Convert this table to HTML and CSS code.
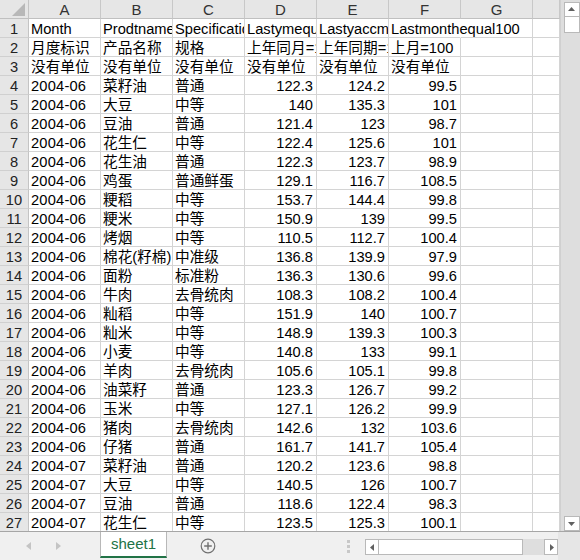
FILE: index.html
```html
<!DOCTYPE html>
<html>
<head>
<meta charset="utf-8">
<link rel="stylesheet" href="styles.css">
</head>
<body>
<div class="top">
  <div class="sheet">
    <div class="row hdr">
      <div class="corner"><svg width="28" height="18" viewBox="0 0 28 18"><polygon points="12,16 25,16 25,3" fill="#b8b8b8"/></svg></div>
      <div class="ch">A</div><div class="ch">B</div><div class="ch">C</div><div class="ch">D</div><div class="ch">E</div><div class="ch">F</div><div class="ch">G</div><div class="ch"></div>
    </div>
    <div class="row"><div class="rh">1</div><div class="c">Month</div><div class="c">Prodtname</div><div class="c">Specification</div><div class="c">Lastymequal100</div><div class="c">Lastyaccmequal100</div><div class="c over">Lastmonthequal100</div><div class="c"></div><div class="c"></div></div>
    <div class="row"><div class="rh">2</div><div class="c">月度标识</div><div class="c">产品名称</div><div class="c">规格</div><div class="c">上年同月=100</div><div class="c">上年同期=100</div><div class="c">上月=100</div><div class="c"></div><div class="c"></div></div>
    <div class="row"><div class="rh">3</div><div class="c">没有单位</div><div class="c">没有单位</div><div class="c">没有单位</div><div class="c">没有单位</div><div class="c">没有单位</div><div class="c">没有单位</div><div class="c"></div><div class="c"></div></div>
    <div class="row"><div class="rh">4</div><div class="c d">2004-06</div><div class="c">菜籽油</div><div class="c">普通</div><div class="c n">122.3</div><div class="c n">124.2</div><div class="c n">99.5</div><div class="c"></div><div class="c"></div></div>
    <div class="row"><div class="rh">5</div><div class="c d">2004-06</div><div class="c">大豆</div><div class="c">中等</div><div class="c n">140</div><div class="c n">135.3</div><div class="c n">101</div><div class="c"></div><div class="c"></div></div>
    <div class="row"><div class="rh">6</div><div class="c d">2004-06</div><div class="c">豆油</div><div class="c">普通</div><div class="c n">121.4</div><div class="c n">123</div><div class="c n">98.7</div><div class="c"></div><div class="c"></div></div>
    <div class="row"><div class="rh">7</div><div class="c d">2004-06</div><div class="c">花生仁</div><div class="c">中等</div><div class="c n">122.4</div><div class="c n">125.6</div><div class="c n">101</div><div class="c"></div><div class="c"></div></div>
    <div class="row"><div class="rh">8</div><div class="c d">2004-06</div><div class="c">花生油</div><div class="c">普通</div><div class="c n">122.3</div><div class="c n">123.7</div><div class="c n">98.9</div><div class="c"></div><div class="c"></div></div>
    <div class="row"><div class="rh">9</div><div class="c d">2004-06</div><div class="c">鸡蛋</div><div class="c">普通鲜蛋</div><div class="c n">129.1</div><div class="c n">116.7</div><div class="c n">108.5</div><div class="c"></div><div class="c"></div></div>
    <div class="row"><div class="rh">10</div><div class="c d">2004-06</div><div class="c">粳稻</div><div class="c">中等</div><div class="c n">153.7</div><div class="c n">144.4</div><div class="c n">99.8</div><div class="c"></div><div class="c"></div></div>
    <div class="row"><div class="rh">11</div><div class="c d">2004-06</div><div class="c">粳米</div><div class="c">中等</div><div class="c n">150.9</div><div class="c n">139</div><div class="c n">99.5</div><div class="c"></div><div class="c"></div></div>
    <div class="row"><div class="rh">12</div><div class="c d">2004-06</div><div class="c">烤烟</div><div class="c">中等</div><div class="c n">110.5</div><div class="c n">112.7</div><div class="c n">100.4</div><div class="c"></div><div class="c"></div></div>
    <div class="row"><div class="rh">13</div><div class="c d">2004-06</div><div class="c">棉花(籽棉)</div><div class="c">中准级</div><div class="c n">136.8</div><div class="c n">139.9</div><div class="c n">97.9</div><div class="c"></div><div class="c"></div></div>
    <div class="row"><div class="rh">14</div><div class="c d">2004-06</div><div class="c">面粉</div><div class="c">标准粉</div><div class="c n">136.3</div><div class="c n">130.6</div><div class="c n">99.6</div><div class="c"></div><div class="c"></div></div>
    <div class="row"><div class="rh">15</div><div class="c d">2004-06</div><div class="c">牛肉</div><div class="c">去骨统肉</div><div class="c n">108.3</div><div class="c n">108.2</div><div class="c n">100.4</div><div class="c"></div><div class="c"></div></div>
    <div class="row"><div class="rh">16</div><div class="c d">2004-06</div><div class="c">籼稻</div><div class="c">中等</div><div class="c n">151.9</div><div class="c n">140</div><div class="c n">100.7</div><div class="c"></div><div class="c"></div></div>
    <div class="row"><div class="rh">17</div><div class="c d">2004-06</div><div class="c">籼米</div><div class="c">中等</div><div class="c n">148.9</div><div class="c n">139.3</div><div class="c n">100.3</div><div class="c"></div><div class="c"></div></div>
    <div class="row"><div class="rh">18</div><div class="c d">2004-06</div><div class="c">小麦</div><div class="c">中等</div><div class="c n">140.8</div><div class="c n">133</div><div class="c n">99.1</div><div class="c"></div><div class="c"></div></div>
    <div class="row"><div class="rh">19</div><div class="c d">2004-06</div><div class="c">羊肉</div><div class="c">去骨统肉</div><div class="c n">105.6</div><div class="c n">105.1</div><div class="c n">99.8</div><div class="c"></div><div class="c"></div></div>
    <div class="row"><div class="rh">20</div><div class="c d">2004-06</div><div class="c">油菜籽</div><div class="c">普通</div><div class="c n">123.3</div><div class="c n">126.7</div><div class="c n">99.2</div><div class="c"></div><div class="c"></div></div>
    <div class="row"><div class="rh">21</div><div class="c d">2004-06</div><div class="c">玉米</div><div class="c">中等</div><div class="c n">127.1</div><div class="c n">126.2</div><div class="c n">99.9</div><div class="c"></div><div class="c"></div></div>
    <div class="row"><div class="rh">22</div><div class="c d">2004-06</div><div class="c">猪肉</div><div class="c">去骨统肉</div><div class="c n">142.6</div><div class="c n">132</div><div class="c n">103.6</div><div class="c"></div><div class="c"></div></div>
    <div class="row"><div class="rh">23</div><div class="c d">2004-06</div><div class="c">仔猪</div><div class="c">普通</div><div class="c n">161.7</div><div class="c n">141.7</div><div class="c n">105.4</div><div class="c"></div><div class="c"></div></div>
    <div class="row"><div class="rh">24</div><div class="c d">2004-07</div><div class="c">菜籽油</div><div class="c">普通</div><div class="c n">120.2</div><div class="c n">123.6</div><div class="c n">98.8</div><div class="c"></div><div class="c"></div></div>
    <div class="row"><div class="rh">25</div><div class="c d">2004-07</div><div class="c">大豆</div><div class="c">中等</div><div class="c n">140.5</div><div class="c n">126</div><div class="c n">100.7</div><div class="c"></div><div class="c"></div></div>
    <div class="row"><div class="rh">26</div><div class="c d">2004-07</div><div class="c">豆油</div><div class="c">普通</div><div class="c n">118.6</div><div class="c n">122.4</div><div class="c n">98.3</div><div class="c"></div><div class="c"></div></div>
    <div class="row"><div class="rh">27</div><div class="c d">2004-07</div><div class="c">花生仁</div><div class="c">中等</div><div class="c n">123.5</div><div class="c n">125.3</div><div class="c n">100.1</div><div class="c"></div><div class="c"></div></div>
  </div>
  <div class="vbar">
    <div class="vbtn"><svg width="13" height="13" viewBox="0 0 13 13"><polygon points="3,8 10,8 6.5,4" fill="#606060"/></svg></div>
    <div class="vthumb"></div>
    <div class="vtrack"></div>
    <div class="vbtn"><svg width="13" height="13" viewBox="0 0 13 13"><polygon points="3,5 10,5 6.5,9" fill="#606060"/></svg></div>
  </div>
</div>
<div class="bottom">
  <div class="nav">
    <svg width="8" height="10" viewBox="0 0 8 10"><polygon points="6,1 6,9 1,5" fill="#c4c4c4"/></svg>
    <svg width="8" height="10" viewBox="0 0 8 10"><polygon points="2,1 2,9 7,5" fill="#c4c4c4"/></svg>
  </div>
  <div class="tab">sheet1</div>
  <div class="plus"><svg width="16" height="16" viewBox="0 0 16 16"><circle cx="8" cy="8" r="6.8" fill="none" stroke="#707070" stroke-width="1.2"/><path d="M8 4.2V11.8M4.2 8H11.8" stroke="#707070" stroke-width="1.4"/></svg></div>
  <div class="dots"><i></i><i></i><i></i></div>
  <div class="hbar">
    <div class="hbtn"><svg width="12" height="13" viewBox="0 0 12 13"><polygon points="8,3 8,10 4,6.5" fill="#606060"/></svg></div>
    <div class="hthumb"></div>
    <div class="htrack"></div>
    <div class="hbtn"><svg width="12" height="13" viewBox="0 0 12 13"><polygon points="5,3 5,10 9,6.5" fill="#606060"/></svg></div>
  </div>
  <div class="corner2"></div>
</div>
</body>
</html>
```
FILE: styles.css
```css
* { box-sizing: border-box; }
html, body { margin: 0; padding: 0; }
body {
  width: 580px;
  height: 560px;
  overflow: hidden;
  background: #f0f0f0;
  font-family: "Liberation Sans", "Noto Sans CJK SC", sans-serif;
  font-size: 14.67px;
  color: #000;
}
.top { display: flex; height: 531px; }
.sheet {
  width: 560px;
  height: 531px;
  overflow: hidden;
  background: #fff;
}
.row {
  display: grid;
  grid-template-columns: 29px repeat(7, 72px) 27px;
  height: 19px;
}
.c, .rh, .ch, .corner {
  height: 19px;
  line-height: 19px;
  white-space: nowrap;
  overflow: hidden;
  border-right: 1px solid #d4d4d4;
  border-bottom: 1px solid #d4d4d4;
}
.c, .rh { padding-top: 1px; line-height: 18px; }
.c { padding-left: 2px; padding-right: 2px; }
.c.n { text-align: right; padding-right: 3px; }
.c.d { letter-spacing: 0.2px; }
.c.over { overflow: visible; border-right-color: transparent; position: relative; z-index: 1; }
.rh {
  background: #e6e6e6;
  color: #222;
  text-align: center;
  border-right-color: #c4c4c4;
  border-bottom-color: #d0d0d0;
}
.hdr .ch, .hdr .corner {
  background: #e6e6e6;
  color: #333;
  text-align: center;
  font-size: 15px;
  border-right-color: #c8c8c8;
  border-bottom-color: #c0c0c0;
}
.hdr .corner { border-right-color: #c4c4c4; }
.corner svg { display: block; }
.vbar {
  width: 20px;
  height: 531px;
  background: #dedede;
  border-left: 1px solid #d0d0d0;
  display: flex;
  flex-direction: column;
  align-items: center;
  padding: 2px 0 0 2px;
}
.vbtn {
  width: 16px;
  height: 15px;
  background: #fff;
  border: 1px solid #b9b9b9;
  display: flex;
  align-items: center;
  justify-content: center;
}
.vthumb {
  width: 16px;
  height: 16px;
  background: #fff;
  border: 1px solid #b9b9b9;
  border-top: none;
}
.vtrack { flex: 1; }
.bottom {
  height: 29px;
  border-top: 1px solid #a6a6a6;
  display: flex;
  align-items: flex-start;
}
.nav {
  width: 100px;
  height: 28px;
  display: flex;
  align-items: center;
  padding-left: 25px;
  gap: 21px;
}
.nav svg { display: block; }
.tab {
  width: 67px;
  height: 26px;
  background: #fff;
  border-left: 1px solid #b8b8b8;
  border-right: 1px solid #b8b8b8;
  border-bottom: 2px solid #217346;
  color: #217346;
  text-align: center;
  line-height: 23px;
  font-size: 15px;
}
.plus {
  margin-left: 33px;
  height: 28px;
  display: flex;
  align-items: center;
}
.plus svg { display: block; }
.dots {
  margin-left: 131px;
  width: 3px;
  height: 28px;
  display: flex;
  flex-direction: column;
  justify-content: center;
  gap: 2px;
}
.dots i { display: block; width: 3px; height: 3px; background: #c8c8c8; }
.hbar {
  margin-left: 15px;
  margin-top: 7px;
  width: 193px;
  height: 16px;
  display: flex;
  background: #dedede;
}
.hbtn {
  width: 14px;
  height: 16px;
  background: #fff;
  border: 1px solid #b9b9b9;
  display: flex;
  align-items: center;
  justify-content: center;
}
.hthumb {
  width: 144px;
  height: 16px;
  background: #fff;
  border: 1px solid #b9b9b9;
  border-left: none;
}
.htrack { flex: 1; }
.corner2 { flex: 1; height: 28px; background: #e6e6e6; }
```
